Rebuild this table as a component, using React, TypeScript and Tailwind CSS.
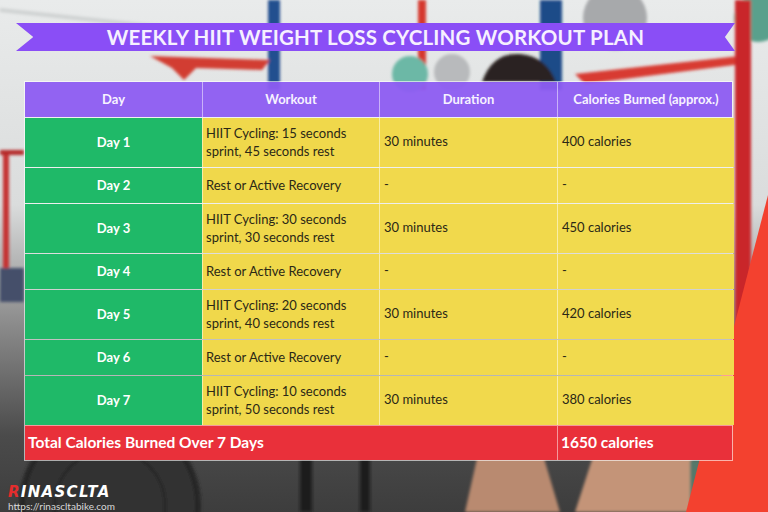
import React from "react";

type Row = {
  day: string;
  workout: string[];
  duration: string;
  calories: string;
};

const rows: Row[] = [
  { day: "Day 1", workout: ["HIIT Cycling: 15 seconds", "sprint, 45 seconds rest"], duration: "30 minutes", calories: "400 calories" },
  { day: "Day 2", workout: ["Rest or Active Recovery"], duration: "-", calories: "-" },
  { day: "Day 3", workout: ["HIIT Cycling: 30 seconds", "sprint, 30 seconds rest"], duration: "30 minutes", calories: "450 calories" },
  { day: "Day 4", workout: ["Rest or Active Recovery"], duration: "-", calories: "-" },
  { day: "Day 5", workout: ["HIIT Cycling: 20 seconds", "sprint, 40 seconds rest"], duration: "30 minutes", calories: "420 calories" },
  { day: "Day 6", workout: ["Rest or Active Recovery"], duration: "-", calories: "-" },
  { day: "Day 7", workout: ["HIIT Cycling: 10 seconds", "sprint, 50 seconds rest"], duration: "30 minutes", calories: "380 calories" },
];

const headers = ["Day", "Workout", "Duration", "Calories Burned (approx.)"];

// rough stand-in for the gym photo behind the table
function GymBackdrop() {
  return (
    <svg className="absolute inset-0" width="768" height="512" viewBox="0 0 768 512">
      <defs>
        <linearGradient id="wall" x1="0" y1="0" x2="0" y2="1">
          <stop offset="0" stopColor="#e9ebeb" />
          <stop offset="0.4" stopColor="#dadcdc" />
          <stop offset="0.62" stopColor="#8f8f8f" />
          <stop offset="0.85" stopColor="#4b4b4b" />
          <stop offset="1" stopColor="#3d3d3d" />
        </linearGradient>
        <filter id="soft">
          <feGaussianBlur stdDeviation="1.5" />
        </filter>
      </defs>
      <rect width="768" height="512" fill="url(#wall)" />
      <g filter="url(#soft)">
        <rect x="0" y="8" width="200" height="4" fill="#cfd2d2" transform="rotate(6 0 8)" />
        <rect x="268" y="0" width="12" height="90" fill="#22508f" />
        <rect x="540" y="0" width="22" height="90" fill="#1d4b88" />
        <rect x="418" y="0" width="8" height="90" fill="#d5392f" />
        <circle cx="615" cy="18" r="32" fill="#a7a9ab" />
        <circle cx="410" cy="74" r="18" fill="#6cb8a6" />
        <circle cx="452" cy="72" r="18" fill="#b8babc" />
        <circle cx="758" cy="18" r="24" fill="#5aa08c" />
        <path d="M150 56 L270 60 L262 70 L196 68 L184 80 L172 68 Z" fill="#d23c32" />
        <path d="M575 74 L740 56 L742 64 L585 84 Z" fill="#d83a30" />
        <path d="M482 82 Q492 52 520 54 Q546 56 556 82 Z" fill="#2b2420" />
        <rect x="735" y="0" width="16" height="430" fill="#c9282a" />
        <rect x="3" y="150" width="6" height="150" fill="#c53030" />
        <rect x="0" y="150" width="24" height="5" fill="#b52a2a" />
        <rect x="0" y="268" width="24" height="34" fill="#44506a" />
        <circle cx="110" cy="505" r="88" fill="#333333" stroke="#272727" strokeWidth="6" />
        <circle cx="110" cy="505" r="55" fill="none" stroke="#2a2a2a" strokeWidth="4" />
        <path d="M465 512 L480 445 L540 445 L560 512 Z" fill="#b98a70" />
        <path d="M575 512 L600 435 L690 445 L700 512 Z" fill="#c49478" />
        <rect x="690" y="460" width="80" height="52" fill="#55786a" />
        <rect x="300" y="458" width="12" height="54" fill="#1c1c1c" />
        <rect x="360" y="458" width="10" height="54" fill="#1c1c1c" />
      </g>
      <path d="M768 195 L768 512 L686 512 Z" fill="#f3412f" />
    </svg>
  );
}

export default function App() {
  return (
    <div
      className="relative h-[512px] w-[768px] overflow-hidden"
      style={{ fontFamily: "Lato, 'Noto Sans', sans-serif" }}
    >
      <GymBackdrop />

      <div className="relative flex flex-col">
        <div className="ml-[16px] mt-[23px] flex h-[28px] w-[719px] items-center justify-center bg-[#8a4ef6] [clip-path:polygon(0_0,100%_0,98.6%_50%,100%_100%,0_100%,2.4%_50%)]">
          <span className="text-[20.5px] font-bold leading-none tracking-[0.2px] text-[#f6f0ff]">
            WEEKLY HIIT WEIGHT LOSS CYCLING WORKOUT PLAN
          </span>
        </div>

        <div className="ml-[24px] mt-[30px] w-[709px] border border-white/60">
          <div className="grid h-[35px] grid-cols-[177px_177px_178px_177px] bg-[#8d5cf2]/95">
            {headers.map((h, i) => (
              <div
                key={h}
                className={`flex items-center justify-center text-[13px] font-bold text-[#f7f2ff] ${i > 0 ? "border-l border-white/50" : ""}`}
              >
                {h}
              </div>
            ))}
          </div>

          {rows.map((r) => {
            const tall = r.workout.length > 1;
            return (
              <div
                key={r.day}
                className={`grid grid-cols-[177px_177px_178px_177px] border-t border-white/50 text-[13px] text-[#2b2816] ${tall ? "h-[50px]" : "h-[36px]"}`}
              >
                <div className="flex items-center justify-center bg-[#1fb968] font-bold text-white">{r.day}</div>
                <div className="flex flex-col justify-center border-l border-white/50 bg-[#f0d84b] pb-[2px] pl-[3px] leading-[18px]">
                  {r.workout.map((w) => (
                    <span key={w}>{w}</span>
                  ))}
                </div>
                <div className="flex items-center border-l border-white/50 bg-[#f1d94c] pb-[2px] pl-[4px]">{r.duration}</div>
                <div className="flex items-center border-l border-white/50 bg-[#f1da4e] pb-[2px] pl-[4px]">{r.calories}</div>
              </div>
            );
          })}

          <div className="grid h-[35px] grid-cols-[532px_177px] border-t border-white/50 bg-[#e9303a] text-[15.5px] font-bold text-white">
            <div className="flex items-center pl-[3px]">Total Calories Burned Over 7 Days</div>
            <div className="flex items-center border-l border-white/50 pl-[3px]">1650 calories</div>
          </div>
        </div>

        <div className="ml-[8px] mt-[25px] flex flex-col">
          <span
            className="h-[13px] text-[15px] font-bold italic leading-[13px] tracking-[1.3px] text-white"
            style={{ fontFamily: "'DejaVu Sans', sans-serif" }}
          >
            <span className="text-[#e52d2d]">R</span>INASCLTA
          </span>
          <span className="mt-[2px] h-[10px] text-[10px] leading-[10px] text-[#d9d9d9]">https://rinascltabike.com</span>
        </div>
      </div>
    </div>
  );
}
